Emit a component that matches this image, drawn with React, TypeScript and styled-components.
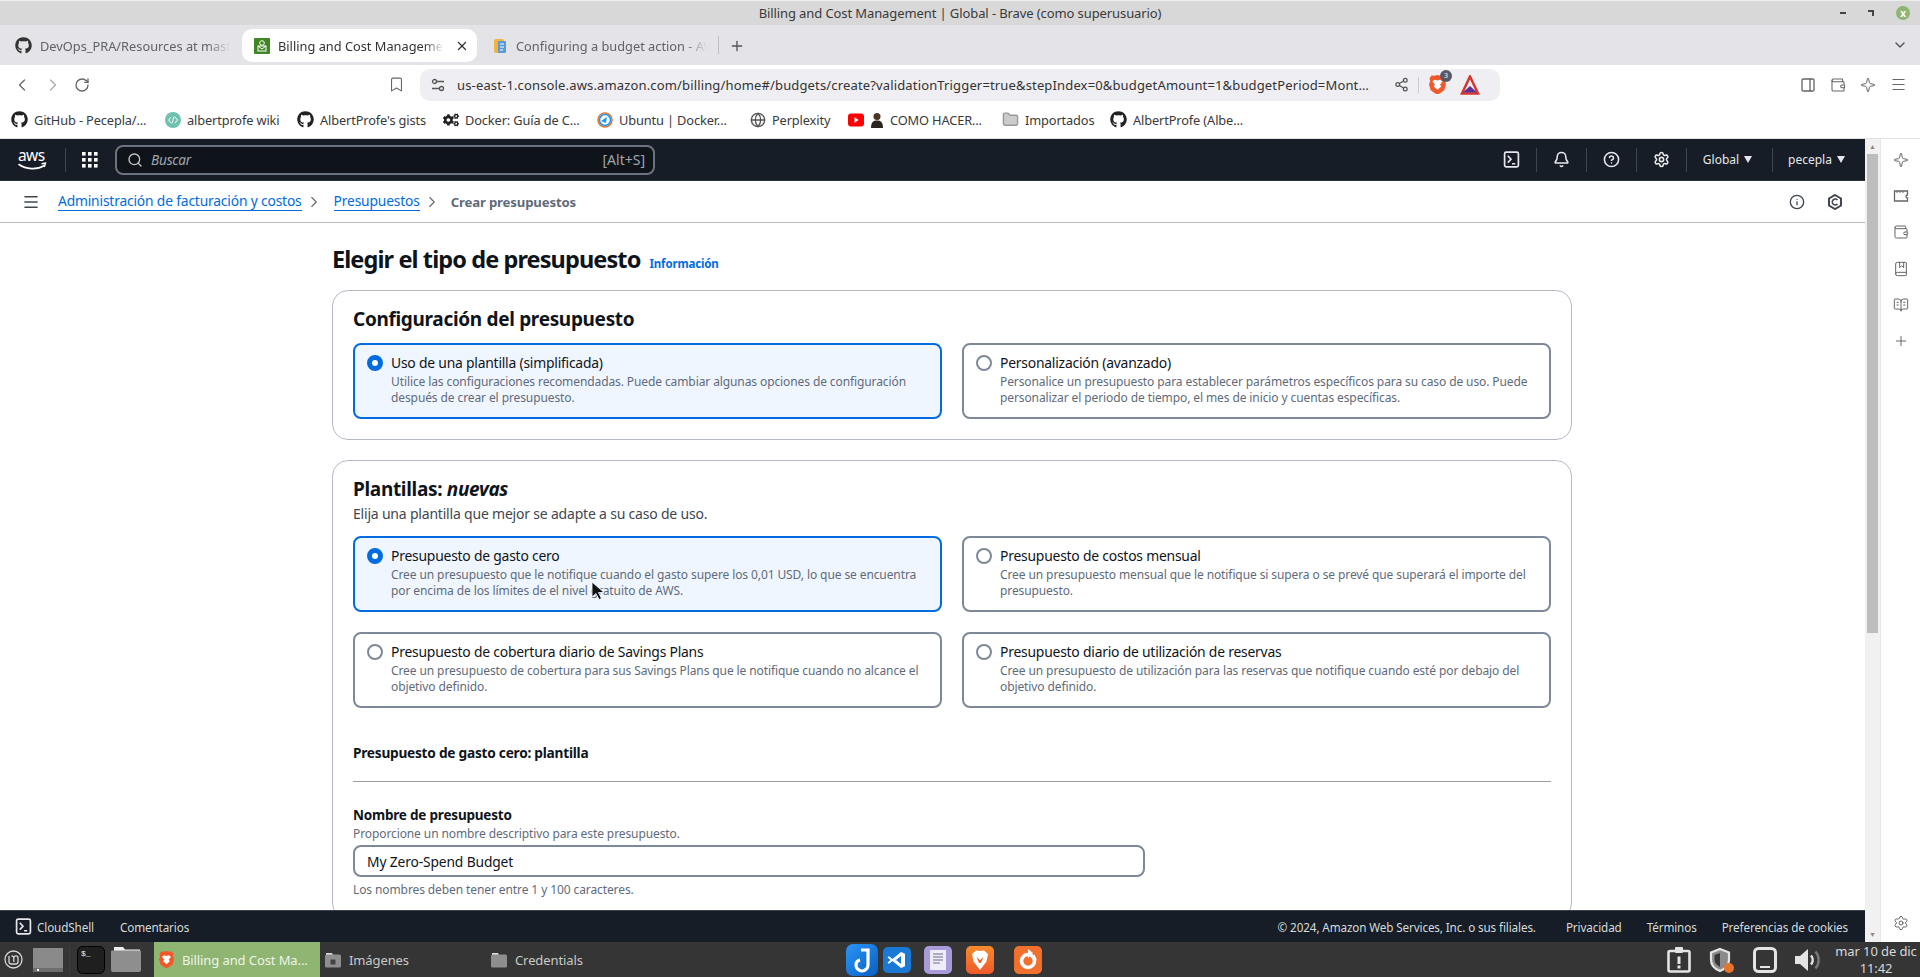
import React from "react";
import styled, { createGlobalStyle } from "styled-components";
import { FaGithub, FaCogs } from "react-icons/fa";
import {
  ChevronLeft, ChevronRight, RotateCw, Bookmark, Share2, Plus, ChevronDown, X, Search, Bell,
  CircleHelp, Settings, Info, PanelRight, Wallet, Sparkle, Globe, Folder,
  BookMarked, BookOpenText, Menu,
} from "lucide-react";

const UI = `"Noto Sans", "Liberation Sans", sans-serif`;

const Global = createGlobalStyle`
  html, body { margin: 0; padding: 0; height: 100%; overflow: hidden; background: #fff; }
  #root { height: 977px; }
  * { box-sizing: border-box; }
`;

const Page = styled.div`
  display: flex; flex-direction: column; width: 1920px; height: 977px; overflow: hidden; position: relative;
  font-family: ${UI}; color: #0f141a;
`;
const TitleBar = styled.div`
  position: relative; height: 25px; background: #d8d8d8; display: flex; align-items: center; justify-content: center;
  font-size: 13px; letter-spacing: -0.1px; color: #3a3a3a; border-top: 1px solid #eee;
`;
const WinControls = styled.div`
  position: absolute; right: 10px; top: 0; bottom: 0; display: flex; align-items: center; gap: 22px;
`;
const WinMin = styled.span` width: 6px; height: 2px; background: #444; `;
const WinMax = styled.span` width: 6px; height: 6px; border-top: 2px solid #444; border-right: 2px solid #444; `;
const WinClose = styled.span`
  width: 14px; height: 14px; border-radius: 50%; background: #8fb573; color: #fff; font-size: 10px;
  display: flex; align-items: center; justify-content: center; font-weight: 700;
`;
const TabStrip = styled.div`
  height: 40px; background: #e3e3e8; display: flex; align-items: flex-end; padding-left: 3px; position: relative; color: #555;
`;
const Tab = styled.div<{ $active?: boolean; $w: number; $pad?: number }>`
  width: ${p => p.$w}px; height: 33px; margin-bottom: 3px; padding-left: ${p => p.$pad ?? 12}px; display: flex; align-items: center; gap: 8px;
  background: ${p => (p.$active ? "#fff" : "transparent")}; border-radius: 10px; font-size: 12.8px;
  color: ${p => (p.$active ? "#333" : "#60636a")}; flex: none; white-space: nowrap; overflow: hidden;
`;
const TabTitle = styled.span<{ $w: number }>`
  width: ${p => p.$w}px; overflow: hidden; flex: none;
  mask-image: linear-gradient(90deg, #000 88%, transparent);
`;
const TabClose = styled.span` display: flex; margin-left: 3px; color: #333; `;
const TabSep = styled.span` width: 1px; height: 18px; background: #bdbdc4; margin: 0 10px 11px 0; `;
const TabEnd = styled.span` position: absolute; right: 12px; top: 12px; color: #555; display: flex; `;
const TabPlus = styled.span` color: #555; display: flex; margin-bottom: 11px; `;
const Toolbar = styled.div`
  height: 39px; background: #fff; display: flex; align-items: center; color: #666;
`;
const NavIcons = styled.div` display: flex; align-items: center; gap: 11px; padding-left: 12px; width: 388px; flex: none; `;
const BookmarkSlot = styled.div` width: 32px; flex: none; display: flex; color: #666; `;
const Omni = styled.div`
  width: 1080px; height: 32px; flex: none; background: #eeeef3; border-radius: 10px; display: flex; align-items: center;
  padding: 0 10px 0 11px; font-size: 13px; letter-spacing: 0.15px; color: #333; white-space: nowrap;
`;
const OmniText = styled.span` margin: 0 21px 0 12px; width: 916px; flex: none; overflow: hidden; text-overflow: ellipsis; `;
const OmniDivider = styled.span` width: 1px; height: 16px; background: #ccc; margin: 0 10px 0 9px; `;
const BraveWrap = styled.span` position: relative; display: flex; margin-right: 14px; `;
const BraveBadge = styled.span`
  position: absolute; right: -6px; top: -5px; width: 12px; height: 12px; border-radius: 50%; background: #555a66; color: #fff;
  font-size: 7px; letter-spacing: 0; display: flex; align-items: center; justify-content: center;
`;
const ToolRight = styled.div` margin-left: auto; padding-right: 13px; display: flex; align-items: center; gap: 14px; color: #666; `;
const Bookmarks = styled.div`
  height: 35px; background: #fff; display: flex; align-items: center; padding: 0 0 3px 11px; font-size: 12.8px; letter-spacing: -0.13px; color: #444;
  white-space: nowrap; border-bottom: 1px solid #e2e2e2;
`;
const Mark = styled.div<{ $w: number }>` width: ${p => p.$w}px; flex: none; display: flex; align-items: center; gap: 6px; color: #3a3a3a; `;
const Main = styled.div` flex: 1; min-height: 0; display: flex; `;
const Console = styled.div` width: 1865px; flex: none; display: flex; flex-direction: column; min-height: 0; `;
const TopNav = styled.div`
  height: 42px; flex: none; background: #161d26; display: flex; align-items: center; color: #e8e8e8; border-bottom: 1px solid #2a323c;
  padding-left: 17px; font-size: 12px;
`;
const NavDiv = styled.span<{ $h?: number }>` width: 1px; height: ${p => p.$h ?? 24}px; background: #3e4550; flex: none; `;
const LogoDivider = styled(NavDiv)` margin-left: 16px; `;
const DotsSlot = styled.span` margin-left: 16px; display: flex; `;
const SearchBox = styled.div`
  width: 540px; height: 30px; margin-left: 17px; border: 2px solid #6b7280; border-radius: 8px; background: #0f141a; display: flex; align-items: center;
  padding: 0 8px 0 10px; color: #c6c6cd; font-size: 13.6px; gap: 8px; letter-spacing: -0.2px;
`;
const SearchHint = styled.i` color: #a0a5ad; `;
const SearchKey = styled.span` margin-left: auto; color: #a0a5ad; letter-spacing: 0; font-size: 14px; `;
const NavRight = styled.div` margin-left: auto; display: flex; align-items: center; height: 100%; color: #e5e7eb; `;
const NavBtn = styled.div<{ $w: number; $pr?: number }>`
  width: ${p => p.$w}px; padding-right: ${p => p.$pr ?? 0}px; display: flex; align-items: center; justify-content: center; gap: 5px;
`;
const Caret = styled.span`
  width: 0; height: 0; border-left: 4px solid transparent; border-right: 4px solid transparent; border-top: 7px solid #e5e7eb;
`;
const Crumbs = styled.div`
  height: 42px; flex: none; background: #fff; border-bottom: 1px solid #b9bdc2; display: flex; align-items: center; padding: 0 22px 0 22px;
  font-size: 13.8px; letter-spacing: -0.16px; white-space: nowrap;
`;
const CrumbLink = styled.a<{ $first?: boolean }>`
  color: #006ce0; border-bottom: 1px solid #006ce0; line-height: 18px; margin-left: ${p => (p.$first ? 18 : 11)}px;
`;
const CrumbSep = styled.span` color: #656871; display: flex; margin: 0 0 0 3px; `;
const CrumbNow = styled.span` color: #5f6b7a; font-weight: 700; margin-left: 10px; font-size: 13.2px; `;
const CrumbIcons = styled.div` margin-left: auto; display: flex; gap: 22px; color: #414750; `;
const Content = styled.div` flex: 1; min-height: 0; overflow: hidden; padding: 0 0 0 332px; background: #fff; `;
const Column = styled.div` width: 1240px; `;
const Heading = styled.div` display: flex; align-items: baseline; height: 67px; padding-top: 22px; gap: 9px; `;
const H1 = styled.h1` margin: 0; font-size: 23.5px; line-height: 28px; font-weight: 700; letter-spacing: -0.9px; `;
const InfoLink = styled.a` color: #006ce0; font-size: 11.5px; font-weight: 700; letter-spacing: -0.15px; `;
const Section = styled.section`
  border: 1px solid #b4bac4; border-radius: 16px; padding: 16px 20px 20px 20px; margin-bottom: 20px; background: #fff;
`;
const H2 = styled.h2` margin: 0; font-size: 19px; line-height: 24px; font-weight: 700; letter-spacing: -0.32px; `;
const H2Italic = styled.em` font-weight: 700; font-style: italic; `;
const SectionLead = styled.p` margin: 4px 0 0; font-size: 14px; line-height: 18px; color: #414750; letter-spacing: -0.2px; `;
const Grid = styled.div<{ $top: number }>` display: grid; grid-template-columns: 589px 589px; column-gap: 20px; row-gap: 20px; margin-top: ${p => p.$top}px; `;
const Option = styled.div<{ $on?: boolean }>`
  height: 76px; border: 2px solid ${p => (p.$on ? "#006ce0" : "#7d8998")}; border-radius: 8px; background: ${p => (p.$on ? "#f0f6ff" : "#fff")};
  display: flex; padding: 9px 8px 0 12px; gap: 8px;
`;
const Radio = styled.span<{ $on?: boolean }>`
  width: 16px; height: 16px; border-radius: 50%; flex: none; margin-top: 1px; background: #fff;
  border: ${p => (p.$on ? "5px solid #006ce0" : "2px solid #7d8998")};
`;
const OptionBody = styled.div` min-width: 0; `;
const OptionTitle = styled.div` font-size: 13.9px; line-height: 18px; color: #0f141a; letter-spacing: -0.22px; `;
const OptionText = styled.div` font-size: 12px; line-height: 16px; margin-top: 2px; color: #5f6b7a; letter-spacing: -0.1px; `;
const SubHeading = styled.div` font-size: 13.7px; line-height: 18px; font-weight: 700; margin-top: 36px; letter-spacing: -0.25px; `;
const Rule = styled.hr` border: 0; border-top: 1px solid #9ba0a8; margin: 19px 0 0; `;
const Label = styled.div` font-size: 13.5px; line-height: 18px; font-weight: 700; margin-top: 24px; letter-spacing: -0.2px; `;
const Hint = styled.div<{ $top?: number }>` font-size: 12px; line-height: 16px; color: #5f6b7a; letter-spacing: -0.1px; margin-top: ${p => p.$top ?? 0}px; `;
const NameInput = styled.div`
  width: 792px; height: 32px; margin-top: 3px; border: 2px solid #7d8998; border-radius: 8px; display: flex; align-items: center; padding: 0 12px;
  font-size: 13.8px; letter-spacing: -0.13px; color: #0f141a;
`;
const Footer = styled.div`
  height: 32px; flex: none; background: #161d26; border-top: 1px solid #3a424d; display: flex; align-items: center; padding: 0 17px 0 15px; font-size: 11.7px;
  letter-spacing: -0.12px; color: #d5dbdb; white-space: nowrap;
`;
const FootShell = styled.div` display: flex; align-items: center; gap: 5px; flex: none; `;
const FootFeedback = styled.span` margin-left: 26px; `;
const FootRight = styled.div` margin-left: auto; display: flex; gap: 30px; `;
const FootLinks = styled.div` display: flex; gap: 25px; `;
const Scrollbar = styled.div` width: 15px; flex: none; background: #f1f1f1; display: flex; flex-direction: column; align-items: center; color: #8a8a8a; font-size: 7px; `;
const ScrollArrow = styled.span` height: 15px; display: flex; align-items: center; `;
const ScrollThumb = styled.div` width: 11px; height: 479px; background: #bdbdbd; `;
const ScrollGap = styled.div` flex: 1; `;
const SidePanel = styled.div`
  width: 40px; flex: none; background: #fff; display: flex; flex-direction: column; align-items: center; padding-top: 13px; gap: 20.200px; color: #666; position: relative;
  border-left: 1px solid #e8e8e8;
`;
const SideGear = styled.span` position: absolute; bottom: 11px; left: 12px; display: flex; color: #666; `;
const Taskbar = styled.div`
  height: 35px; flex: none; background: #353535; display: flex; align-items: center; color: #cfcfcf; font-size: 13px; letter-spacing: -0.1px;
  white-space: nowrap;
`;
const TaskLeft = styled.div` display: flex; align-items: center; width: 154px; flex: none; padding-left: 4px; height: 100%; `;
const TileGap = styled.span<{ $w: number }>` width: ${p => p.$w}px; flex: none; `;
const TaskSep = styled.span` width: 1px; height: 28px; background: #3f3f3f; margin: 0 7px 0 6px; flex: none; `;
const TaskWin = styled.div<{ $on?: boolean; $w: number }>`
  width: ${p => p.$w}px; height: 35px; flex: none; display: flex; align-items: center; gap: 8px; padding-left: 5px;
  background: ${p => (p.$on ? "#8fb573" : "transparent")}; color: ${p => (p.$on ? "#eef4e8" : "#c9c9c9")};
`;
const Dock = styled.div` display: flex; align-items: center; margin-left: 200px; `;
const DockSlot = styled.div<{ $w: number }>` width: ${p => p.$w}px; flex: none; display: flex; align-items: center; `;
const Tray = styled.div` margin-left: auto; display: flex; align-items: center; padding-right: 3px; `;
const TrayItem = styled.span<{ $mr: number }>` display: flex; margin-right: ${p => p.$mr}px; `;
const Clock = styled.div` width: 82px; text-align: center; font-size: 13px; line-height: 17px; color: #d8d8d8; letter-spacing: -0.1px; `;
const Cursor = styled.svg` position: absolute; left: 591px; top: 581px; `;

const Brave = ({ s = 16 }: { s?: number }) => (
  <svg width={s} height={s * 1.15} viewBox="0 0 20 23"><path fill="#f1582b" d="M10 0l4 1 3-.5 2.500 3-1 3 1.500 4-2 7.500-5 3.500-3 1.500-3-1.500-5-3.500L0 11l1.500-4-1-3L3 .5 6 1z"/><path fill="#fff" d="M10 6.500l3-1 3 2-3 4 1.500 2-4.500 4-4.500-4L7 11.500l-3-4 3-2z"/></svg>
);
const AwsLogo = () => (
  <svg width="32" height="24" viewBox="0 0 32 24"><text x="1" y="13" fill="#fff" fontFamily="Noto Sans, sans-serif" fontSize="15.500" letterSpacing="-.6">aws</text><path d="M2 16.500c7 5 18 5.500 25 1.200" fill="none" stroke="#fff" strokeWidth="1.600" strokeLinecap="round"/><path d="M24.500 15.800l4-.6-1.200 3.800" fill="none" stroke="#fff" strokeWidth="1.400"/></svg>
);
const Dots = () => (
  <svg width="16" height="16" viewBox="0 0 16 16" fill="#fff">{[0, 6, 12].flatMap(x => [0, 6, 12].map(y => <rect key={`${x}${y}`} x={x} y={y} width="3.600" height="3.600" />))}</svg>
);
const ShellIcon = ({ s = 16, c = "#e5e7eb" }: { s?: number; c?: string }) => (
  <svg width={s} height={s} viewBox="0 0 16 16" fill="none" stroke={c} strokeWidth="1.600"><rect x="1.500" y="1" width="13" height="14" rx="1.500"/><path d="M4.500 4.500l3 3.300-3 3.200M8.500 12h3"/></svg>
);
const HexClock = () => (
  <svg width="16" height="16" viewBox="0 0 16 16" fill="none" stroke="currentColor" strokeWidth="2"><path d="M8 1l6 3.500v7L8 15l-6-3.500v-7z"/><path d="M10.500 6A3 3 0 1 0 10.500 10" strokeWidth="1.500"/></svg>
);
const BudgetFav = () => (
  <svg width="16" height="16" viewBox="0 0 16 16"><rect width="16" height="16" rx="1" fill="#3f8624"/><circle cx="8" cy="5" r="2.300" fill="none" stroke="#fff" strokeWidth="1"/><rect x="4" y="8" width="8" height="5" fill="none" stroke="#fff" strokeWidth="1"/><path d="M4 8l4 3 4-3" stroke="#fff" fill="none"/></svg>
);
const DocsFav = () => (
  <svg width="16" height="17" viewBox="0 0 16 17"><rect x="2" y="2" width="10" height="14" rx="2" fill="#f2b340"/><rect x="6" y="4" width="8" height="12" rx="1" fill="#5b9bd5"/><path d="M8 7h4M8 10h4M8 13h3" stroke="#fff"/></svg>
);
const Triangle = () => (
  <svg width="20" height="20" viewBox="0 0 20 20"><path d="M10 1.500L18 18.500H2z" fill="none" stroke="#d9342b" strokeWidth="2.500"/><path d="M3 17.500h14L10 11z" fill="#5b2d91"/></svg>
);
const UbuntuMark = () => (
  <svg width="16" height="16" viewBox="0 0 16 16"><circle cx="8" cy="8" r="7" fill="none" stroke="#e2762f" strokeWidth="1.500"/><circle cx="8" cy="8" r="5.500" fill="none" stroke="#2496ed" strokeWidth="1.500"/><path d="M4 9l6-4-1 6z" fill="#2496ed"/></svg>
);
const Youtube = () => (
  <svg width="16" height="14" viewBox="0 0 16 14"><rect width="16" height="13" y="0.500" rx="3" fill="#f00"/><path d="M6.500 4l4 3-4 3z" fill="#fff"/></svg>
);
const Person = () => (
  <svg width="14" height="16" viewBox="0 0 14 16"><circle cx="7" cy="4.500" r="3.500" fill="#4a3527"/><path d="M1 16c0-6 2.500-7.500 6-7.500S13 10 13 16z" fill="#2a2320"/></svg>
);
const WikiMark = () => (
  <svg width="16" height="16" viewBox="0 0 16 16"><circle cx="8" cy="8" r="8" fill="#6fc2ad"/><path d="M6 5L3.500 8 6 11M10 5l2.500 3-2.500 3M9 4.500l-2 7" stroke="#fff" fill="none"/></svg>
);
const TalkIcon = () => (
  <svg width="16" height="16" viewBox="0 0 16 16" fill="none" stroke="currentColor" strokeWidth="1.300"><path d="M1.500 3h13v4a1.500 1.500 0 000 3v3h-13z"/><path d="M4 3v2M7 3v2M10 3v2" strokeWidth="1"/></svg>
);
const MintLogo = () => (
  <svg width="19" height="19" viewBox="0 0 19 19" fill="none" stroke="#d8d8d8" strokeWidth="1.300"><circle cx="9.500" cy="9.500" r="8.500"/><path d="M5 6v5.500a2.500 2.500 0 002.500 2.500h4a2.500 2.500 0 002.500-2.500V8a2 2 0 00-4.200 0v4M9.800 8a2 2 0 00-2.300-2"/></svg>
);
const DesktopTile = () => (
  <svg width="30" height="24" viewBox="0 0 30 24"><rect width="30" height="24" fill="#8a8a8a"/><rect y="20" width="30" height="4" fill="#6e6e6e"/><rect x="4" y="21" width="2" height="2" fill="#fff"/></svg>
);
const TerminalTile = () => (
  <svg width="28" height="28" viewBox="0 0 28 28"><rect x="0.500" y="0.500" width="27" height="27" rx="5" fill="#1f1f1f" stroke="#000"/><text x="4" y="10" fill="#eee" fontSize="8" fontFamily="Liberation Mono, monospace">$_</text></svg>
);
const FolderTile = () => (
  <svg width="30" height="25" viewBox="0 0 30 25"><path d="M3 0h9l2 2.500H29V6H3z" fill="#f0f0f0"/><path d="M1 3.500h28a1 1 0 011 1V23a2 2 0 01-2 2H2a2 2 0 01-2-2V4.500a1 1 0 011-1z" fill="#8e8e8e"/></svg>
);
const SmallFolder = ({ lock }: { lock?: boolean }) => (
  <svg width="16" height="17" viewBox="0 0 16 17"><path d="M1 2h6l1 2h7v2H1z" fill="#ddd"/><rect y="3.500" width="16" height="13" rx="1.500" fill="#8e8e8e"/>{lock && <rect x="5.500" y="8.500" width="5" height="5" fill="#444"/>}</svg>
);
const DockJ = () => (
  <svg width="32" height="32" viewBox="0 0 32 32"><defs><linearGradient id="jg" x1="0" y1="0" x2="1" y2="1"><stop offset="0" stopColor="#2a95f5"/><stop offset="1" stopColor="#0a5fc4"/></linearGradient></defs><rect width="32" height="32" rx="7" fill="url(#jg)"/><path d="M15 6h7v15a6 6 0 01-12 0c0-3 1.500-4.500 4-5" fill="none" stroke="#fff" strokeWidth="3.200"/></svg>
);
const DockVs = () => (
  <svg width="28" height="26" viewBox="0 0 28 26"><rect width="28" height="26" rx="5" fill="#1b79d6"/><path d="M18 5L9.500 12 6 9.300 4.500 10.200 7.500 13l-3 2.800L6 16.700 9.500 14l8.500 7 4-1.800V6.800zm0 4v8l-5-4z" fill="#fff"/></svg>
);
const DockNote = () => (
  <svg width="28" height="28" viewBox="0 0 28 28"><rect width="28" height="28" rx="5" fill="#a99bd9"/><rect x="6" y="4" width="16" height="20" fill="#eeecf8"/><path d="M9 8h10M9 11h10M9 14h10M9 17h7" stroke="#6d6d8c"/></svg>
);
const DockBrave = () => (
  <svg width="28" height="28" viewBox="0 0 28 28"><defs><linearGradient id="bg" x1="0" y1="0" x2="0" y2="1"><stop offset="0" stopColor="#f88a2e"/><stop offset="1" stopColor="#ee5a2a"/></linearGradient></defs><rect width="28" height="28" rx="5" fill="url(#bg)"/><path d="M14 5l4-.5 4 3.500-1.500 7.500L14 24l-6.500-8.500L6 8l4-3.500z" fill="#fff"/><path d="M14 14l3.500-3-2.500 6h-2l-2.500-6z" fill="#f06a2c"/></svg>
);
const DockFox = () => (
  <svg width="28" height="28" viewBox="0 0 28 28"><rect width="28" height="28" rx="5" fill="#f2702e"/><circle cx="14" cy="15" r="6.500" fill="none" stroke="#fff" strokeWidth="3.600"/><path d="M14 3l5 4-5 5z" fill="#fff"/><path d="M20 8l3 6-4-2z" fill="#fff"/></svg>
);
const Shield = () => (
  <svg width="27" height="26" viewBox="0 0 27 26"><path d="M12 2l9 3.500V13c0 5-4 9-9 11C7 22 3 18 3 13V5.500z" fill="#8b8b8b" stroke="#e4e4e4" strokeWidth="2.200"/><path d="M12 6v14c-3-1.800-5.500-4-5.500-7.500V8z" fill="#353535"/><circle cx="21" cy="21" r="5" fill="#e8742c"/></svg>
);
const TrayDevice = () => (
  <svg width="24" height="26" viewBox="0 0 24 26"><rect x="1.500" y="1.500" width="21" height="23" rx="4" fill="none" stroke="#e4e4e4" strokeWidth="3"/><path d="M7 21v-2h10v2z" fill="#e4e4e4"/></svg>
);
const Clip = () => (
  <svg width="24" height="26" viewBox="0 0 24 26"><rect x="1.500" y="4" width="21" height="20.500" rx="1.500" fill="none" stroke="#e4e4e4" strokeWidth="2.600"/><rect x="8" y="0" width="8" height="6" rx="1" fill="#e4e4e4"/><path d="M12 9.500v7.500M12 18.500v3" stroke="#e4e4e4" strokeWidth="3"/></svg>
);
const Speaker = () => (
  <svg width="28" height="26" viewBox="0 0 28 26" fill="none"><path d="M1 9h5l8-7v22l-8-7H1z" fill="#e4e4e4"/><path d="M17 8.500a7 7 0 010 9" stroke="#e4e4e4" strokeWidth="2.500"/><path d="M21.500 4.500a13 13 0 010 17" stroke="#777" strokeWidth="2.500"/></svg>
);

const options1 = [
  { t: "Uso de una plantilla (simplificada)", d: "Utilice las configuraciones recomendadas. Puede cambiar algunas opciones de configuración después de crear el presupuesto.", on: true },
  { t: "Personalización (avanzado)", d: "Personalice un presupuesto para establecer parámetros específicos para su caso de uso. Puede personalizar el periodo de tiempo, el mes de inicio y cuentas específicas." },
];
const options2 = [
  { t: "Presupuesto de gasto cero", d: "Cree un presupuesto que le notifique cuando el gasto supere los 0,01 USD, lo que se encuentra por encima de los límites de el nivel gratuito de AWS.", on: true },
  { t: "Presupuesto de costos mensual", d: "Cree un presupuesto mensual que le notifique si supera o se prevé que superará el importe del presupuesto." },
  { t: "Presupuesto de cobertura diario de Savings Plans", d: "Cree un presupuesto de cobertura para sus Savings Plans que le notifique cuando no alcance el objetivo definido." },
  { t: "Presupuesto diario de utilización de reservas", d: "Cree un presupuesto de utilización para las reservas que notifique cuando esté por debajo del objetivo definido." },
];

const OptionCard = ({ t, d, on }: { t: string; d: string; on?: boolean }) => (
  <Option $on={on}>
    <Radio $on={on} />
    <OptionBody>
      <OptionTitle>{t}</OptionTitle>
      <OptionText>{d}</OptionText>
    </OptionBody>
  </Option>
);

export default function App() {
  return (
    <Page>
      <Global />
      <TitleBar>
        Billing and Cost Management | Global - Brave (como superusuario)
        <WinControls><WinMin /><WinMax /><WinClose>x</WinClose></WinControls>
      </TitleBar>
      <TabStrip>
        <Tab $w={239}><FaGithub size={17} color="#333" /><TabTitle $w={190}>DevOps_PRA/Resources at master</TabTitle></Tab>
        <Tab $active $w={235}><BudgetFav /><TabTitle $w={166}>Billing and Cost Management</TabTitle><TabClose><X size={14} strokeWidth={2.200} /></TabClose></Tab>
        <Tab $w={241} $pad={15}><DocsFav /><TabTitle $w={191}>Configuring a budget action - AWS</TabTitle></Tab>
        <TabSep /><TabPlus><Plus size={16} /></TabPlus>
        <TabEnd><ChevronDown size={16} /></TabEnd>
      </TabStrip>
      <Toolbar>
        <NavIcons><ChevronLeft size={20} strokeWidth={1.500} /><ChevronRight size={20} strokeWidth={1.500} color="#aaa" /><RotateCw size={16} /></NavIcons>
        <BookmarkSlot><Bookmark size={17} strokeWidth={1.500} /></BookmarkSlot>
        <Omni>
          <svg width="14" height="14" viewBox="0 0 14 14" fill="none" stroke="#555" strokeWidth="1.300"><circle cx="3.500" cy="3.500" r="2"/><path d="M6 3.500h7M1 10.500h7"/><circle cx="10.500" cy="10.500" r="2"/></svg>
          <OmniText>us-east-1.console.aws.amazon.com/billing/home#/budgets/create?validationTrigger=true&amp;stepIndex=0&amp;budgetAmount=1&amp;budgetPeriod=Monthly&amp;budgetName=zero</OmniText>
          <Share2 size={15} color="#555" />
          <OmniDivider />
          <BraveWrap><Brave s={17} /><BraveBadge>3</BraveBadge></BraveWrap>
          <Triangle />
        </Omni>
        <ToolRight><PanelRight size={16} /><Wallet size={16} strokeWidth={1.600} /><Sparkle size={16} strokeWidth={1.500} /><Menu size={17} strokeWidth={1.500} /></ToolRight>
      </Toolbar>
      <Bookmarks>
        <Mark $w={154}><FaGithub size={17} color="#222" />GitHub - Pecepla/...</Mark>
        <Mark $w={132}><WikiMark />albertprofe wiki</Mark>
        <Mark $w={146}><FaGithub size={17} color="#222" />AlbertProfe's gists</Mark>
        <Mark $w={154}><FaCogs size={16} color="#222" />Docker: Guía de C...</Mark>
        <Mark $w={153}><UbuntuMark />Ubuntu | Docker...</Mark>
        <Mark $w={98}><Globe size={16} color="#555" />Perplexity</Mark>
        <Mark $w={154}><Youtube /><Person />COMO HACER...</Mark>
        <Mark $w={108}><Folder size={17} fill="#ccc" color="#999" />Importados</Mark>
        <Mark $w={150}><FaGithub size={17} color="#222" />AlbertProfe (Albe...</Mark>
      </Bookmarks>
      <Main>
        <Console>
          <TopNav>
            <AwsLogo />
            <LogoDivider $h={24} />
            <DotsSlot><Dots /></DotsSlot>
            <SearchBox><Search size={16} /><SearchHint>Buscar</SearchHint><SearchKey>[Alt+S]</SearchKey></SearchBox>
            <NavRight>
              <NavBtn $w={49}><ShellIcon s={17} /></NavBtn><NavDiv />
              <NavBtn $w={49}><Bell size={17} strokeWidth={2.200} /></NavBtn><NavDiv />
              <NavBtn $w={49}><CircleHelp size={17} strokeWidth={2.200} /></NavBtn><NavDiv />
              <NavBtn $w={49}><Settings size={17} strokeWidth={2.200} /></NavBtn><NavDiv />
              <NavBtn $w={85} $pr={4}>Global <Caret /></NavBtn><NavDiv />
              <NavBtn $w={92} $pr={5}>pecepla <Caret /></NavBtn>
            </NavRight>
          </TopNav>
          <Crumbs>
            <Menu size={18} color="#414750" strokeWidth={2.200} />
            <CrumbLink $first>Administración de facturación y costos</CrumbLink>
            <CrumbSep><ChevronRight size={18} strokeWidth={1.500} /></CrumbSep>
            <CrumbLink>Presupuestos</CrumbLink>
            <CrumbSep><ChevronRight size={18} strokeWidth={1.500} /></CrumbSep>
            <CrumbNow>Crear presupuestos</CrumbNow>
            <CrumbIcons><Info size={16} strokeWidth={2} /><HexClock /></CrumbIcons>
          </Crumbs>
          <Content>
            <Column>
              <Heading><H1>Elegir el tipo de presupuesto</H1><InfoLink>Información</InfoLink></Heading>
              <Section>
                <H2>Configuración del presupuesto</H2>
                <Grid $top={12}>{options1.map(o => <OptionCard key={o.t} {...o} />)}</Grid>
              </Section>
              <Section>
                <H2>Plantillas: <H2Italic>nuevas</H2Italic></H2>
                <SectionLead>Elija una plantilla que mejor se adapte a su caso de uso.</SectionLead>
                <Grid $top={13}>{options2.map(o => <OptionCard key={o.t} {...o} />)}</Grid>
                <SubHeading>Presupuesto de gasto cero: plantilla</SubHeading>
                <Rule />
                <Label>Nombre de presupuesto</Label>
                <Hint $top={2}>Proporcione un nombre descriptivo para este presupuesto.</Hint>
                <NameInput>My Zero-Spend Budget</NameInput>
                <Hint $top={5}>Los nombres deben tener entre 1 y 100 caracteres.</Hint>
              </Section>
            </Column>
          </Content>
          <Footer>
            <FootShell><ShellIcon s={17} />CloudShell</FootShell>
            <FootFeedback>Comentarios</FootFeedback>
            <FootRight>
              <span>© 2024, Amazon Web Services, Inc. o sus filiales.</span>
              <FootLinks><span>Privacidad</span><span>Términos</span><span>Preferencias de cookies</span></FootLinks>
            </FootRight>
          </Footer>
        </Console>
        <Scrollbar>
          <ScrollArrow>▲</ScrollArrow><ScrollThumb /><ScrollGap /><ScrollArrow>▼</ScrollArrow>
        </Scrollbar>
        <SidePanel>
          <Sparkle size={16} strokeWidth={1.500} /><TalkIcon /><Wallet size={16} strokeWidth={1.500} /><BookMarked size={16} strokeWidth={1.500} /><BookOpenText size={16} strokeWidth={1.500} /><Plus size={16} strokeWidth={1.500} />
          <SideGear><Settings size={16} strokeWidth={1.500} /></SideGear>
        </SidePanel>
      </Main>
      <Taskbar>
        <TaskLeft><MintLogo /><TileGap $w={10} /><DesktopTile /><TaskSep /><TerminalTile /><TileGap $w={6} /><FolderTile /></TaskLeft>
        <TaskWin $on $w={166}><Brave s={15} />Billing and Cost Ma...</TaskWin>
        <TaskWin $w={166}><SmallFolder lock />Imágenes</TaskWin>
        <TaskWin $w={160}><SmallFolder />Credentials</TaskWin>
        <Dock>
          <DockSlot $w={37}><DockJ /></DockSlot>
          <DockSlot $w={41}><DockVs /></DockSlot>
          <DockSlot $w={42}><DockNote /></DockSlot>
          <DockSlot $w={48}><DockBrave /></DockSlot>
          <DockSlot $w={28}><DockFox /></DockSlot>
        </Dock>
        <Tray>
          <TrayItem $mr={17}><Clip /></TrayItem>
          <TrayItem $mr={18}><Shield /></TrayItem>
          <TrayItem $mr={17}><TrayDevice /></TrayItem>
          <TrayItem $mr={13}><Speaker /></TrayItem>
          <Clock>mar 10 de dic<br />11:42</Clock>
        </Tray>
      </Taskbar>
      <Cursor width="14" height="20" viewBox="0 0 14 20"><path d="M1 1v15l4-3.500 3 6 2.500-1-3-6H13z" fill="#111" stroke="#fff" strokeWidth="0.800"/></Cursor>
    </Page>
  );
}
